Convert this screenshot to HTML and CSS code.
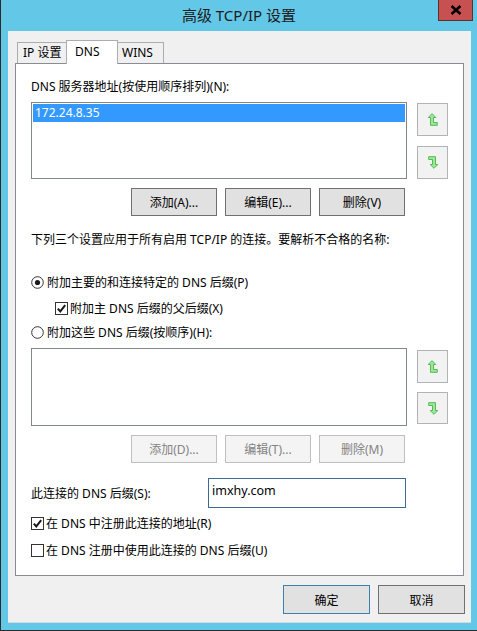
FILE: index.html
```html
<!DOCTYPE html>
<html lang="zh-CN">
<head>
<meta charset="utf-8">
<title>高级 TCP/IP 设置</title>
<link rel="stylesheet" href="styles.css">
</head>
<body>
<div class="window">
  <div class="titlebar">
    <span class="title">高级 TCP/IP 设置</span>
    <div class="close">
      <svg width="12" height="10" viewBox="0 0 12 10"><path d="M1.5 1 L10.5 9 M10.5 1 L1.5 9" stroke="#000" stroke-width="2.6" fill="none"/></svg>
    </div>
  </div>
  <div class="client">
    <div class="tabs">
      <div class="tab tab-first">IP 设置</div>
      <div class="tab tab-active">DNS</div>
      <div class="tab tab-last">WINS</div>
    </div>
    <div class="panel">
      <div class="line label-top">DNS 服务器地址(按使用顺序排列)(N):</div>
      <div class="listrow listrow-1">
        <div class="listbox listbox-1"><div class="item selected">172.24.8.35</div></div>
        <div class="arrows arrows-1">
          <div class="arrow">
            <svg width="10" height="13" viewBox="0 0 10 13"><path d="M4 0.7 L7.8 4.5 L5.5 4.5 L5.5 9.5 L9.3 9.5 L9.3 12.3 L2.5 12.3 L2.5 4.5 L0.2 4.5 Z" fill="#9fe79f" stroke="#52bb52" stroke-width="1" stroke-linejoin="miter"/></svg>
          </div>
          <div class="arrow">
            <svg width="10" height="13" viewBox="0 0 10 13"><g transform="rotate(180 5 6.5)"><path d="M4 0.7 L7.8 4.5 L5.5 4.5 L5.5 9.5 L9.3 9.5 L9.3 12.3 L2.5 12.3 L2.5 4.5 L0.2 4.5 Z" fill="#9fe79f" stroke="#52bb52" stroke-width="1"/></g></svg>
          </div>
        </div>
      </div>
      <div class="btnrow btnrow-1">
        <div class="btn">添加(A)...</div>
        <div class="btn">编辑(E)...</div>
        <div class="btn">删除(V)</div>
      </div>
      <div class="line desc">下列三个设置应用于所有启用 TCP/IP 的连接。要解析不合格的名称:</div>
      <div class="option opt-radio1">
        <svg class="radio" width="13" height="13" viewBox="0 0 13 13"><circle cx="6.5" cy="6.5" r="5.8" fill="#fff" stroke="#333" stroke-width="1"/><circle cx="6.5" cy="6.5" r="2.6" fill="#1a1a1a"/></svg>
        <span>附加主要的和连接特定的 DNS 后缀(P)</span>
      </div>
      <div class="option opt-check1">
        <svg class="check" width="13" height="13" viewBox="0 0 13 13"><rect x="0.5" y="0.5" width="12" height="12" fill="#fff" stroke="#333"/><path d="M2.8 6.6 L5.3 9.4 L10.2 3.2" fill="none" stroke="#1a1a1a" stroke-width="2"/></svg>
        <span>附加主 DNS 后缀的父后缀(X)</span>
      </div>
      <div class="option opt-radio2">
        <svg class="radio" width="13" height="13" viewBox="0 0 13 13"><circle cx="6.5" cy="6.5" r="5.8" fill="#fff" stroke="#333" stroke-width="1"/></svg>
        <span>附加这些 DNS 后缀(按顺序)(H):</span>
      </div>
      <div class="listrow listrow-2">
        <div class="listbox listbox-2"></div>
        <div class="arrows arrows-2">
          <div class="arrow">
            <svg width="10" height="13" viewBox="0 0 10 13"><path d="M4 0.7 L7.8 4.5 L5.5 4.5 L5.5 9.5 L9.3 9.5 L9.3 12.3 L2.5 12.3 L2.5 4.5 L0.2 4.5 Z" fill="#9fe79f" stroke="#52bb52" stroke-width="1"/></svg>
          </div>
          <div class="arrow arrow-short">
            <svg width="10" height="13" viewBox="0 0 10 13"><g transform="rotate(180 5 6.5)"><path d="M4 0.7 L7.8 4.5 L5.5 4.5 L5.5 9.5 L9.3 9.5 L9.3 12.3 L2.5 12.3 L2.5 4.5 L0.2 4.5 Z" fill="#9fe79f" stroke="#52bb52" stroke-width="1"/></g></svg>
          </div>
        </div>
      </div>
      <div class="btnrow btnrow-2">
        <div class="btn btn-disabled">添加(D)...</div>
        <div class="btn btn-disabled">编辑(T)...</div>
        <div class="btn btn-disabled">删除(M)</div>
      </div>
      <div class="suffixrow">
        <span class="suffix-label">此连接的 DNS 后缀(S):</span>
        <div class="textbox">imxhy.com</div>
      </div>
      <div class="option opt-check2">
        <svg class="check" width="13" height="13" viewBox="0 0 13 13"><rect x="0.5" y="0.5" width="12" height="12" fill="#fff" stroke="#333"/><path d="M2.8 6.6 L5.3 9.4 L10.2 3.2" fill="none" stroke="#1a1a1a" stroke-width="2"/></svg>
        <span>在 DNS 中注册此连接的地址(R)</span>
      </div>
      <div class="option opt-check3">
        <svg class="check" width="13" height="13" viewBox="0 0 13 13"><rect x="0.5" y="0.5" width="12" height="12" fill="#fff" stroke="#333"/></svg>
        <span>在 DNS 注册中使用此连接的 DNS 后缀(U)</span>
      </div>
    </div>
    <div class="footer">
      <div class="btn btn-wide btn-default">确定</div>
      <div class="btn btn-wide">取消</div>
    </div>
  </div>
</div>
</body>
</html>
```

FILE: styles.css
```css
* { box-sizing: border-box; }

html, body {
  margin: 0;
  padding: 0;
}

body {
  width: 477px;
  height: 631px;
  overflow: hidden;
  font-family: "Noto Sans", "Noto Sans CJK SC", sans-serif;
  font-size: 12px;
  color: #000;
}

.window {
  width: 477px;
  height: 631px;
  background: #63c8e8;
  border-left: 1px solid #2b2b2b;
  border-bottom: 1px solid #2b2b2b;
}

.titlebar {
  height: 31px;
  display: grid;
  grid-template-columns: 1fr auto 1fr;
  align-items: start;
}

.title {
  grid-column: 2;
  font-size: 15px;
  line-height: 31px;
  color: #1b1b1b;
  white-space: nowrap;
}

.close {
  grid-column: 3;
  justify-self: end;
  margin-right: 4px;
  width: 35px;
  height: 21px;
  background: #c75050;
  border: 1px solid #5a3030;
  border-top: none;
  display: flex;
  align-items: center;
  justify-content: center;
}

.client {
  margin-left: 7px;
  width: 463px;
  height: 592px;
  background: #f0f0f0;
  padding: 9px 7px 0 7px;
  border-bottom: 1px solid #d4dbe0;
}

.tabs {
  position: relative;
  z-index: 1;
  display: flex;
  align-items: flex-end;
  height: 24px;
  margin-bottom: -1px;
  padding-left: 2px;
}

.tab {
  height: 21px;
  margin-bottom: 1px;
  border: 1px solid #acacac;
  border-bottom: none;
  background: #f0f0f0;
  line-height: 20px;
  white-space: nowrap;
}

.tab-first {
  width: 49px;
  border-right: none;
  padding-left: 5px;
}

.tab-active {
  width: 52px;
  height: 24px;
  margin-bottom: 0;
  background: #fff;
  line-height: 22px;
  padding-left: 8px;
}

.tab-last {
  width: 46px;
  border-left: none;
  padding-left: 4px;
}

.panel {
  height: 513px;
  background: #fff;
  border: 1px solid #898c95;
  padding: 14px 0 0 15px;
}

.line {
  height: 18px;
  line-height: 18px;
  white-space: nowrap;
}

.listrow {
  display: flex;
  gap: 10px;
}

.listrow-1 { margin-top: 6px; }
.listrow-2 { margin-top: 7px; }

.listbox {
  width: 376px;
  height: 77px;
  border: 1px solid #828790;
  background: #fff;
  padding: 1px;
}

.listbox-2 { height: 78px; }

.item {
  height: 18px;
  line-height: 18px;
  padding-left: 2px;
}

.item.selected {
  background: #3399ff;
  color: #fff;
}

.arrows {
  display: flex;
  flex-direction: column;
}

.arrows-1 { padding-top: 1px; gap: 10px; }
.arrows-2 { padding-top: 2px; gap: 9px; }

.arrow {
  width: 31px;
  height: 33px;
  border: 1px solid #b1b4b6;
  background: #f2f2f2;
  display: flex;
  align-items: center;
  justify-content: center;
}

.arrow-short { height: 32px; }

.btnrow {
  display: flex;
  gap: 8px;
  padding-left: 100px;
  margin-top: 9px;
}

.btn {
  width: 86px;
  height: 28px;
  border: 1px solid #707070;
  background: #e1e1e1;
  display: flex;
  align-items: center;
  justify-content: center;
  white-space: nowrap;
}

.btn-disabled {
  border-color: #bfbfbf;
  background: #f4f4f4;
  color: #838383;
}

.desc { margin-top: 15px; }

.option {
  display: flex;
  align-items: center;
  height: 18px;
  white-space: nowrap;
}

.option .radio { margin-right: 3px; }
.option .check { margin-right: 2px; }

.opt-radio1 { margin-top: 24px; }
.opt-check1 { margin-top: 8px; padding-left: 24px; }
.opt-radio2 { margin-top: 6px; }
.opt-check2 { margin-top: 6px; }
.opt-check3 { margin-top: 9px; }

.suffixrow {
  display: flex;
  align-items: center;
  margin-top: 15px;
  height: 30px;
}

.suffix-label {
  width: 177px;
  white-space: nowrap;
}

.textbox {
  width: 198px;
  height: 30px;
  border: 1px solid #3d6a93;
  padding: 0 3px;
  line-height: 24px;
  font-size: 12.5px;
}

.footer {
  display: flex;
  justify-content: flex-end;
  gap: 8px;
  margin-top: 9px;
  margin-right: -1px;
}

.btn-wide {
  width: 87px;
  height: 29px;
}

.btn-default {
  border-color: #3c7fb1;
}
```
